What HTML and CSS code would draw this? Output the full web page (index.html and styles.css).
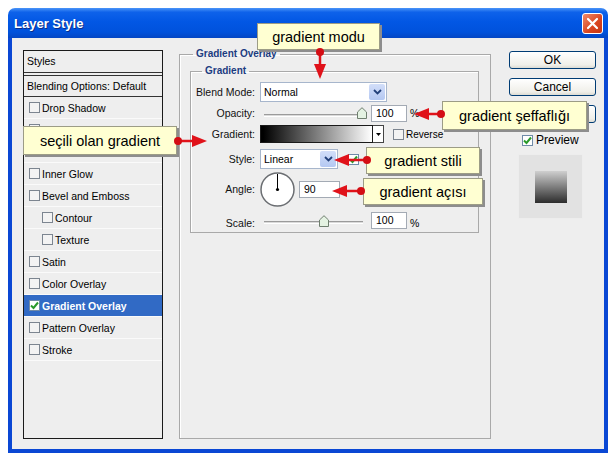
FILE: index.html
```html
<!DOCTYPE html>
<html>
<head>
  <title>Layer Style</title>
  <link rel="stylesheet" href="styles.css">
</head>
<body>
  <div class="window">
    <div class="title-bar">
      <span class="title">Layer Style</span>
      <span class="close-btn">
        <svg width="13" height="13" viewBox="0 0 13 13"><path d="M2 2L11 11M11 2L2 11" stroke="#fff" stroke-width="2.2" stroke-linecap="round"/></svg>
      </span>
    </div>

    <div class="dialog">
      <!-- styles list -->
      <div class="styles-list">
        <div class="list-head">Styles</div>
        <div class="list-blend">Blending Options: Default</div>
        <div class="item"><span class="check"></span>Drop Shadow</div>
        <div class="item"><span class="check"></span>Inner Shadow</div>
        <div class="item"><span class="check"></span>Outer Glow</div>
        <div class="item"><span class="check"></span>Inner Glow</div>
        <div class="item"><span class="check"></span>Bevel and Emboss</div>
        <div class="item item-sub"><span class="check"></span>Contour</div>
        <div class="item item-sub"><span class="check"></span>Texture</div>
        <div class="item"><span class="check"></span>Satin</div>
        <div class="item"><span class="check"></span>Color Overlay</div>
        <div class="item item-active">
          <span class="check checked"><svg width="9" height="9" viewBox="0 0 9 9"><path d="M1 4.5L3.5 7L8 1.5" fill="none" stroke="#2a9a2a" stroke-width="2"/></svg></span>Gradient Overlay
        </div>
        <div class="item"><span class="check"></span>Pattern Overlay</div>
        <div class="item"><span class="check"></span>Stroke</div>
      </div>

      <!-- settings -->
      <fieldset class="group">
        <legend>Gradient Overlay</legend>
        <fieldset class="subgroup">
          <legend>Gradient</legend>
          <div class="form">
            <div class="row row-blend">
              <span class="label">Blend Mode:</span>
              <div class="select select-wide">
                <span class="select-text">Normal</span>
                <span class="select-btn"><svg width="9" height="6" viewBox="0 0 9 6"><path d="M1 1L4.5 4.5L8 1" fill="none" stroke="#22407a" stroke-width="1.8"/></svg></span>
              </div>
            </div>
            <div class="row row-opacity">
              <span class="label">Opacity:</span>
              <div class="slider">
                <span class="track"></span>
                <svg class="thumb" style="left: 97px" width="10" height="12" viewBox="0 0 10 12"><path d="M0.5 5L5 0.7L9.5 5V11.5H0.5Z" fill="#e4f2e2" stroke="#6f7f6f"/></svg>
              </div>
              <span class="field">100</span>
              <span class="unit">%</span>
            </div>
            <div class="row row-gradient">
              <span class="label">Gradient:</span>
              <span class="swatch"></span>
              <span class="swatch-arrow"><svg width="5" height="3" viewBox="0 0 5 3"><path d="M0 0H5L2.5 3Z" fill="#000"/></svg></span>
              <span class="check small-check"></span>
              <span class="small-text">Reverse</span>
            </div>
            <div class="row row-style">
              <span class="label">Style:</span>
              <div class="select select-narrow">
                <span class="select-text">Linear</span>
                <span class="select-btn"><svg width="9" height="6" viewBox="0 0 9 6"><path d="M1 1L4.5 4.5L8 1" fill="none" stroke="#22407a" stroke-width="1.8"/></svg></span>
              </div>
              <span class="check checked align-check"><svg width="9" height="9" viewBox="0 0 9 9"><path d="M1 4.5L3.5 7L8 1.5" fill="none" stroke="#2a9a2a" stroke-width="2"/></svg></span>
            </div>
            <div class="row row-angle">
              <span class="label">Angle:</span>
              <svg class="dial" width="35" height="35" viewBox="0 0 35 35">
                <circle cx="17.5" cy="17.5" r="16.5" fill="#fff" stroke="#6b6e72" stroke-width="1.5"/>
                <path d="M17.5 2V17.5" stroke="#000" stroke-width="1"/>
                <circle cx="17.5" cy="17.5" r="1.6" fill="#000"/>
              </svg>
              <span class="field field-angle">90</span>
            </div>
            <div class="row row-scale">
              <span class="label">Scale:</span>
              <div class="slider">
                <span class="track"></span>
                <svg class="thumb" style="left: 59px" width="10" height="12" viewBox="0 0 10 12"><path d="M0.5 5L5 0.7L9.5 5V11.5H0.5Z" fill="#e4f2e2" stroke="#6f7f6f"/></svg>
              </div>
              <span class="field">100</span>
              <span class="unit">%</span>
            </div>
          </div>
        </fieldset>
      </fieldset>

      <!-- buttons and preview -->
      <div class="side">
        <button class="btn">OK</button>
        <button class="btn">Cancel</button>
        <button class="btn">New Style...</button>
        <div class="preview-check">
          <span class="check checked"><svg width="9" height="9" viewBox="0 0 9 9"><path d="M1 4.5L3.5 7L8 1.5" fill="none" stroke="#2a9a2a" stroke-width="2"/></svg></span>
          Preview
        </div>
        <div class="preview-box"><div class="preview-swatch"></div></div>
      </div>
    </div>

    <!-- annotations -->
    <div class="callout callout-mode">gradient modu</div>
    <div class="callout callout-selected">seçili olan gradient</div>
    <div class="callout callout-opacity">gradient şeffaflığı</div>
    <div class="callout callout-style">gradient stili</div>
    <div class="callout callout-angle">gradient açısı</div>

    <svg class="arrows" width="600" height="445" viewBox="8 8 600 445">
      <g fill="#e0121a" stroke="#e0121a">
        <path d="M320 52V65" stroke-width="2.5"/>
        <path d="M314 64H326L320 79Z" stroke="none"/>
        <circle cx="320" cy="52" r="4" fill="#d40d14" stroke="none"/>

        <path d="M178 141H193" stroke-width="2.5"/>
        <path d="M192 135V147L207 141Z" stroke="none"/>
        <circle cx="178" cy="141" r="4" fill="#d40d14" stroke="none"/>

        <path d="M441 114H428" stroke-width="2.5"/>
        <path d="M429 108V120L414 114Z" stroke="none"/>
        <circle cx="441" cy="114" r="4" fill="#d40d14" stroke="none"/>

        <path d="M367 160H348" stroke-width="2.5"/>
        <path d="M349 154V166L334 160Z" stroke="none"/>
        <circle cx="367" cy="160" r="4" fill="#d40d14" stroke="none"/>

        <path d="M361 191H346" stroke-width="2.5"/>
        <path d="M347 185V197L332 191Z" stroke="none"/>
        <circle cx="361" cy="191" r="4" fill="#d40d14" stroke="none"/>
      </g>
    </svg>
  </div>
</body>
</html>
```

FILE: styles.css
```css
* {
  box-sizing: border-box;
}

html {
  overflow: hidden;
}

body {
  margin: 8px 0 0 8px;
  background: #fff;
  color: #000;
  font-family: "Liberation Sans", Arial, sans-serif;
  font-size: 10.5px;
}

.window {
  position: relative;
  width: 600px;
  height: 445px;
  display: flex;
  flex-direction: column;
}

.title-bar {
  height: 30px;
  flex: none;
  display: flex;
  align-items: center;
  justify-content: space-between;
  padding: 0 5px 0 6px;
  border-radius: 7px 7px 0 0;
  background: linear-gradient(#4a94f8 0%, #0e62ea 14%, #0257e4 45%, #0052dc 80%, #0346c4 100%);
}

.title {
  color: #fff;
  font-size: 13px;
  font-weight: bold;
  text-shadow: 1px 1px 0 #0b2f8a;
}

.close-btn {
  width: 21px;
  height: 21px;
  display: flex;
  align-items: center;
  justify-content: center;
  border: 1px solid #fff;
  border-radius: 3px;
  background: linear-gradient(135deg, #f08a6a, #d9441f 60%, #c43514);
}

.dialog {
  flex: 1;
  display: flex;
  padding: 12px 8px 10px 11px;
  background: #eeeeee;
  border: 4px solid #0a47d4;
  border-top: none;
}

/* styles list */
.styles-list {
  width: 140px;
  flex: none;
  margin-right: 16px;
  border: 1px solid #1a1a1a;
  background: #eeeeee;
}

.list-head {
  height: 22px;
  padding-left: 3px;
  line-height: 21px;
  border-bottom: 1px solid #333;
}

.list-blend {
  height: 22px;
  margin-top: 2px;
  padding-left: 3px;
  line-height: 20px;
  border-top: 1px solid #333;
  border-bottom: 1px solid #333;
}

.item {
  height: 22px;
  display: flex;
  align-items: center;
  gap: 2px;
  padding-left: 5px;
  border-bottom: 1px solid #fafafa;
}

.item-sub {
  padding-left: 18px;
}

.item-active {
  background: #316ac5;
  color: #fff;
  font-weight: bold;
}

.check {
  width: 11px;
  height: 11px;
  flex: none;
  display: inline-flex;
  align-items: center;
  justify-content: center;
  border: 1px solid #7c8590;
  background: #f3f3f3;
}

.check.checked {
  background: #fff;
  border-color: #6f8aa8;
}

/* settings group */
.group {
  width: 312px;
  flex: none;
  min-width: 0;
  margin: -2px 18px 0 0;
  padding: 0 11px 0 10px;
  border: 1px solid #a9a9a9;
  box-shadow: inset 1px 1px 0 #fff;
}

.group > legend {
  margin-left: 3px;
  padding: 0 3px;
  font-size: 10px;
  font-weight: bold;
  line-height: 12px;
  color: #1c3c80;
}

.subgroup {
  margin: 5px 0 0;
  padding: 0 0 3px;
  min-width: 0;
  border: 1px solid #a9a9a9;
  box-shadow: inset 1px 1px 0 #fff;
}

.subgroup > legend {
  margin-left: 11px;
  padding: 0 3px;
  font-size: 10px;
  font-weight: bold;
  line-height: 12px;
  color: #1c3c80;
}

.form {
  padding-top: 4px;
}

.row {
  display: flex;
  align-items: center;
}

.row-blend { height: 22px; }
.row-opacity { height: 20px; }
.row-gradient { height: 22px; }
.row-style { height: 28px; }
.row-angle { height: 32px; }
.row-scale { height: 24px; align-items: flex-end; }

.label {
  width: 64px;
  flex: none;
  margin-right: 5px;
  text-align: right;
  color: #111;
}

.select {
  height: 20px;
  display: flex;
  align-items: center;
  justify-content: space-between;
  padding: 1px;
  border: 1px solid #a7b6cc;
  background: #fff;
}

.select-wide { width: 127px; }
.select-narrow { width: 78px; }

.select-text {
  padding-left: 2px;
}

.select-btn {
  width: 16px;
  height: 16px;
  display: flex;
  align-items: center;
  justify-content: center;
  border-radius: 2px;
  background: linear-gradient(#d2def9, #b4c8f2);
}

.slider {
  position: relative;
  width: 107px;
  height: 20px;
  margin-right: 4px;
}

.row-scale .slider {
  height: 16px;
}

.track {
  position: absolute;
  left: 4px;
  top: 11px;
  width: 99px;
  height: 3px;
  border-top: 1px solid #9b9b9b;
  border-bottom: 1px solid #fff;
  background: #dadada;
}

.row-scale .track {
  top: 8px;
}

.thumb {
  position: absolute;
  top: 4px;
}

.row-scale .thumb {
  top: 2px;
}

.field {
  width: 36px;
  height: 17px;
  padding-left: 4px;
  line-height: 15px;
  border: 1px solid #a3aab4;
  background: #fff;
}

.field-angle {
  width: 41px;
}

.unit {
  margin-left: 3px;
}

.dial {
  margin: 0 4px 0 0;
  flex: none;
}

.swatch {
  width: 113px;
  height: 18px;
  border: 1px solid #1a1a1a;
  background: linear-gradient(to right, #000 2%, #fff 100%);
}

.swatch-arrow {
  width: 11px;
  height: 18px;
  display: flex;
  align-items: center;
  justify-content: center;
  border: 1px solid #444;
  border-left: none;
  background: #fff;
}

.small-check {
  margin: 0 2px 0 9px;
}

.small-text {
  font-size: 10px;
}

.align-check {
  margin-left: 10px;
}

/* right column */
.side {
  width: 87px;
  flex: none;
  display: flex;
  flex-direction: column;
  padding-top: 1px;
}

.btn {
  height: 18px;
  margin: 0 0 9px;
  padding: 0;
  border: 1px solid #003c74;
  border-radius: 3px;
  background: linear-gradient(#ffffff, #f0efe9 80%, #dcdbd3);
  font-family: "Liberation Sans", Arial, sans-serif;
  font-size: 12px;
  color: #000;
}

.preview-check {
  display: flex;
  align-items: center;
  gap: 3px;
  height: 12px;
  margin: 2px 0 0 13px;
  font-size: 12px;
}

.preview-box {
  width: 65px;
  height: 65px;
  margin: 8px 0 0 9px;
  display: flex;
  align-items: center;
  justify-content: center;
  background: #e2e2e2;
  border: 1px solid #ededed;
}

.preview-swatch {
  width: 32px;
  height: 32px;
  background: linear-gradient(#cfcfcf, #2c2c2c);
}

/* annotations */
.callout {
  position: absolute;
  display: flex;
  align-items: center;
  justify-content: center;
  font-size: 14.5px;
  background: #ffffd2;
  border: 1px solid #9c9c86;
  box-shadow: 2px 2px 0 #8d8d8d;
}

.callout-mode { left: 249px; top: 15px; width: 123px; height: 27px; }
.callout-selected { left: 15px; top: 118px; width: 154px; height: 29px; }
.callout-opacity { left: 434px; top: 93px; width: 145px; height: 29px; }
.callout-style { left: 358px; top: 139px; width: 114px; height: 27px; }
.callout-angle { left: 355px; top: 170px; width: 120px; height: 27px; }

.arrows {
  position: absolute;
  left: 0;
  top: 0;
  pointer-events: none;
}
```
